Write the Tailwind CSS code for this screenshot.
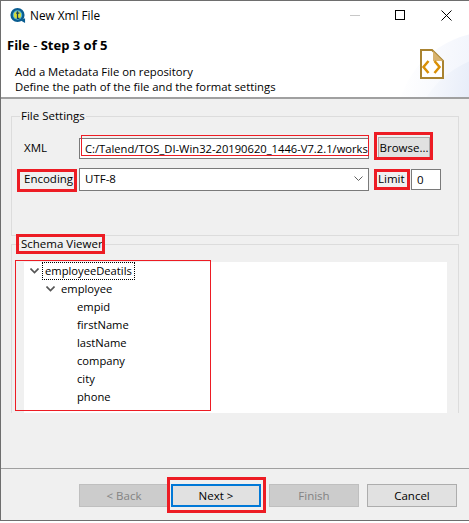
<!DOCTYPE html>
<html><head><meta charset="utf-8"><script src="https://cdn.jsdelivr.net/npm/@tailwindcss/browser@4"></script></head>
<body class="bg-white">
<div class="relative w-[469px] h-[523px] overflow-hidden flex flex-col font-['Open_Sans',sans-serif] text-[11.500px] leading-[16px] text-black bg-white">
  <!-- window frame -->
  <div class="flex flex-col h-[521px] border-t border-l border-[#6e6e6e] shrink-0">
    <!-- title bar -->
    <div class="h-[28px] flex items-center shrink-0">
      <svg class="ml-[8px] w-[17px] h-[17px]" viewBox="0 0 18 18"><circle cx="9" cy="8.500" r="7.500" fill="#0a5d91"/><path d="M12 14l5 3v-5z" fill="#0a5d91"/><circle cx="9" cy="8.500" r="5" fill="#5fb8cf"/><circle cx="9" cy="8.500" r="3.800" fill="#d8dc3a"/><path d="M9 4.500v7.500h2M7.500 6.500h3.500" stroke="#14405f" stroke-width="1.300" fill="none"/></svg>
      <span class="ml-[4px] text-[11.800px]">New Xml File</span>
      <div class="ml-auto flex items-center h-full">
        <div class="w-[10px] h-px bg-[#c8c8c8] mr-[35px]"></div>
        <div class="w-[10px] h-[10px] border border-black mr-[36px]"></div>
        <svg class="w-[11px] h-[11px] mr-[17px]" viewBox="0 0 11 11"><path d="M.5.5l10 10M10.500.5l-10 10" stroke="#000" stroke-width="1"/></svg>
      </div>
    </div>
    <!-- banner -->
    <div class="relative h-[70px] shrink-0 border-b-2 border-[#a0a0a0] overflow-hidden bg-white">
      <div class="absolute left-[395px] top-[3px] w-[200px] h-[190px] rounded-full bg-[linear-gradient(100deg,#ffffff_5%,#edf1fb_45%)]"></div>
      <div class="absolute left-[410px] top-[25px] w-[200px] h-[190px] rounded-full bg-[linear-gradient(100deg,#ffffff_0%,#dde5f6_40%)]"></div>
      <div class="relative pl-[6px] pt-[8px] font-bold text-[13px]">File <span class="font-normal">-</span> Step 3 of 5</div>
      <div class="relative pl-[14px] pt-[11px] leading-[15px] text-[11.300px]">Add a Metadata File on repository<br>Define the path of the file and the format settings</div>
      <svg class="absolute left-[419px] top-[20px] w-[24px] h-[30px]" viewBox="0 0 24 30"><path d="M1 1h11l11 11v17H1z" fill="#fff" stroke="#a98330" stroke-width="2"/><path d="M13 2v10h10z" fill="#d8b36f"/><path d="M8.500 12l-5 6 5 6M14.500 12l5 6-5 6" stroke="#d98f05" stroke-width="2.500" fill="none"/></svg>
    </div>
    <!-- body -->
    <div class="flex-1 flex flex-col bg-[#f0f0f0] min-h-0 pl-[10px] pr-[10px] pt-[17px]">
      <!-- File Settings -->
      <div class="relative h-[120px] w-[448px] shrink-0 border border-[#dcdcdc]">
        <span class="absolute left-[8px] top-[-9px] bg-[#f0f0f0] px-px">File Settings</span>
        <div class="absolute inset-x-0 top-[20px] flex items-center h-[22px]">
          <span class="ml-[12px] w-[55px]">XML</span>
          <div class="w-[290px] h-[21px] border border-[#7a7a7a] bg-white pl-[5px] overflow-hidden whitespace-nowrap leading-[19px] text-[11.200px]">C:/Talend/TOS_DI-Win32-20190620_1446-V7.2.1/works</div>
          <div class="ml-[9px] w-[52px] h-[22px] bg-[#e1e1e1] border border-[#adadad] flex items-center justify-center">Browse...</div>
        </div>
        <div class="absolute inset-x-0 top-[51px] flex items-center h-[22px]">
          <span class="ml-[12px] w-[55px]">Encoding</span>
          <div class="relative w-[290px] h-[23px] border border-[#7a7a7a] bg-white pl-[5px] leading-[19px]">UTF-8
            <svg class="absolute right-[5px] top-[7px] w-[9px] h-[6px]" viewBox="0 0 9 6"><path d="M.5.500l4 4 4-4" stroke="#606060" fill="none"/></svg>
          </div>
          <span class="ml-[9px] w-[33px]">Limit</span>
          <div class="w-[30px] h-[21px] border border-[#7a7a7a] bg-white pl-[5px] leading-[19px]">0</div>
        </div>
      </div>
      <!-- Schema Viewer -->
      <div class="relative mt-[8px] h-[169px] w-[448px] shrink-0 border-t border-x border-[#dcdcdc]">
        <span class="absolute left-[8px] top-[-9px] bg-[#f0f0f0] px-px">Schema Viewer</span>
        <div class="absolute left-[12px] right-[11px] top-[17px] bottom-0 bg-white text-[11.200px] leading-[18px]">
          <div class="flex items-center h-[18px]">
            <svg class="ml-[6px] w-[9px] h-[6px]" viewBox="0 0 9 6"><path d="M.5.500l4 4 4-4" stroke="#555" stroke-width="1.600" fill="none"/></svg>
            <span class="ml-[3px] px-[3px] outline outline-dotted outline-1 -outline-offset-1 outline-black h-[18px]">employeeDeatils</span>
          </div>
          <div class="flex items-center h-[18px]">
            <svg class="ml-[22px] w-[9px] h-[6px]" viewBox="0 0 9 6"><path d="M.5.500l4 4 4-4" stroke="#555" stroke-width="1.600" fill="none"/></svg>
            <span class="ml-[6px]">employee</span>
          </div>
          <div class="pl-[53px]">
            <div>empid</div><div>firstName</div><div>lastName</div><div>company</div><div>city</div><div>phone</div>
          </div>
        </div>
      </div>
      <div class="flex-1"></div>
    </div>
    <!-- button bar -->
    <div class="h-[53px] shrink-0 bg-[#f0f0f0] border-t border-[#a0a0a0] border-b border-b-[#6e6e6e] flex items-start pt-[15px] pl-[78px]">
      <div class="w-[90px] h-[23px] bg-[#cccccc] border border-[#bfbfbf] text-[#838383] flex items-center justify-center">&lt; Back</div>
      <div class="ml-[2px] w-[90px] h-[23px] bg-[#e1e1e1] border-2 border-[#0078d7] flex items-center justify-center">Next &gt;</div>
      <div class="ml-[8px] w-[90px] h-[23px] bg-[#cccccc] border border-[#bfbfbf] text-[#838383] flex items-center justify-center">Finish</div>
      <div class="ml-[8px] w-[90px] h-[23px] bg-[#e1e1e1] border border-[#adadad] flex items-center justify-center">Cancel</div>
    </div>
  </div>
  <!-- red annotations -->
  <div class="absolute left-[81px] top-[135px] w-[288px] h-[21px] border border-[#ed1c24]"></div>
  <div class="absolute left-[374px] top-[132px] w-[59px] h-[28px] border-[3px] border-[#ed1c24]"></div>
  <div class="absolute left-[17px] top-[169px] w-[60px] h-[23px] border-[3px] border-[#ed1c24]"></div>
  <div class="absolute left-[374px] top-[169px] w-[36px] h-[21px] border-[3px] border-[#ed1c24]"></div>
  <div class="absolute left-[16px] top-[234px] w-[89px] h-[20px] border-[3px] border-[#ed1c24]"></div>
  <div class="absolute left-[15px] top-[260px] w-[196px] h-[151px] border border-[#ed1c24]"></div>
  <div class="absolute left-[167px] top-[477px] w-[99px] h-[36px] border-[3px] border-[#ed1c24]"></div>
</div>
</body></html>
